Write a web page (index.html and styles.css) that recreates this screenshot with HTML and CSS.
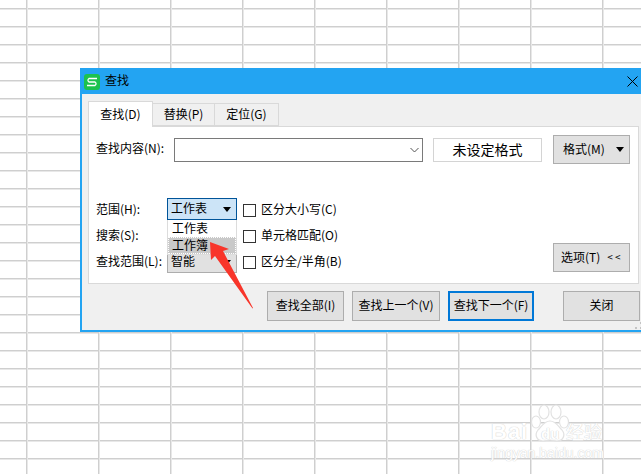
FILE: index.html
```html
<!DOCTYPE html>
<html lang="zh-CN">
<head>
<meta charset="utf-8">
<title>查找</title>
<link rel="stylesheet" href="styles.css">
</head>
<body>
<div class="watermark">
  <svg class="paw" width="44" height="40" viewBox="0 0 44 40">
    <g fill="#fff" stroke="#e2e2e2" stroke-width="1.2">
      <ellipse cx="8" cy="18" rx="4.5" ry="6"/>
      <ellipse cx="16" cy="8" rx="5" ry="7"/>
      <ellipse cx="28" cy="8" rx="5" ry="7"/>
      <ellipse cx="36" cy="18" rx="4.5" ry="6"/>
      <path d="M22 17c6 0 8 5 12 9 4 5 1 11-5 11-3 0-4-1-7-1s-4 1-7 1c-6 0-9-6-5-11 4-4 6-9 12-9z"/>
    </g>
  </svg>
  <div class="wm-brand"><span class="wm-bai">Bai</span><span class="wm-du">du</span><span class="wm-jy">经验</span></div>
  <div class="wm-url">jingyan.baidu.com</div>
</div>

<div class="dialog">
  <header class="titlebar">
    <svg class="app-icon" width="16" height="16" viewBox="0 0 16 16">
      <rect width="16" height="16" rx="3" fill="#1cc24e"/>
      <path d="M13 4.5H5a2 2 0 0 0 0 3.500h6a2 2 0 0 1 0 3.500H3" fill="none" stroke="#fff" stroke-width="1.300"/>
    </svg>
    <span class="title">查找</span>
    <svg class="close" width="11" height="11" viewBox="0 0 11 11">
      <path d="M.5.5l10 10M10.500.5l-10 10" fill="none" stroke="#000" stroke-width="1"/>
    </svg>
  </header>

  <div class="content">
    <nav class="tabs">
      <div class="tab tab-active">查找(D)</div>
      <div class="tab tab-2">替换(P)</div>
      <div class="tab tab-3">定位(G)</div>
    </nav>

    <section class="panel">
      <div class="find-row">
        <label class="find-label">查找内容(N):</label>
        <div class="find-input">
          <svg width="9" height="6" viewBox="0 0 9 6"><path d="M.5 1l4 4 4-4" fill="none" stroke="#555" stroke-width="1"/></svg>
        </div>
        <div class="format-state">未设定格式</div>
        <div class="btn btn-format">格式(M)<i class="caret caret-format"></i></div>
      </div>

      <div class="options">
        <div class="option-grid">
          <label class="opt-label">范围(H):</label>
          <div class="select select-open">
            <span>工作表</span><i class="caret"></i>
            <div class="dropdown">
              <div class="dd-item">工作表</div>
              <div class="dd-item dd-selected">工作簿</div>
            </div>
          </div>
          <span class="check"></span><span class="check-text">区分大小写(C)</span>

          <label class="opt-label">搜索(S):</label>
          <div class="select-spacer"></div>
          <span class="check"></span><span class="check-text">单元格匹配(O)</span>

          <label class="opt-label">查找范围(L):</label>
          <div class="select select-low"><span>智能</span><i class="caret"></i></div>
          <span class="check"></span><span class="check-text">区分全/半角(B)</span>
        </div>
        <div class="btn btn-options">选项(T)<span class="chev">&lt; &lt;</span></div>
      </div>
    </section>

    <footer class="actions">
      <div class="btn btn-all">查找全部(I)</div>
      <div class="btn btn-prev">查找上一个(V)</div>
      <div class="btn btn-next">查找下一个(F)</div>
      <div class="btn btn-closeit">关闭</div>
    </footer>
  </div>
  <svg class="grip" width="8" height="8" viewBox="0 0 8 8"><path d="M5 0h2v2H5zM0 5h2v2H0zM5 5h2v2H5z" fill="#c4c4c4"/></svg>

  <svg class="pointer" width="60" height="72" viewBox="0 0 60 72">
    <polygon points="1,2 20,9 14,11 44,68 43.500,68.500 6,16 2,20" fill="#f8352a"/>
  </svg>
</div>
</body>
</html>
```
FILE: styles.css
```css
* { box-sizing: border-box; }
html, body { margin: 0; height: 100%; }
body {
  position: relative;
  width: 641px;
  height: 474px;
  overflow: hidden;
  background-color: #fff;
  background-image:
    linear-gradient(to right, #cfcfcf 1px, #e8e8e8 1px, #e8e8e8 2px, transparent 2px),
    linear-gradient(to bottom, #cfcfcf 1px, #e8e8e8 1px, #e8e8e8 2px, transparent 2px);
  background-size: 72px 18px;
  background-position: 26px 8px;
  font: 12px/16px "Noto Sans CJK SC", "Liberation Sans", sans-serif;
  color: #000;
}

/* watermark */
.watermark {
  position: absolute;
  left: 491px;
  top: 403px;
  width: 118px;
  height: 56px;
}
.paw { position: absolute; left: 37px; top: 1px; }
.wm-brand {
  position: absolute;
  left: 0; top: 16px;
  display: flex;
  align-items: baseline;
  color: #fff;
  text-shadow: 0 0 1px #d2d2d2, 0 0 1px #d2d2d2;
  white-space: nowrap;
}
.wm-bai { font: bold 22px/24px "Liberation Sans", sans-serif; width: 42px; letter-spacing: 1px; }
.wm-du { font: bold 15px/24px "Liberation Sans", sans-serif; width: 33px; padding-left: 8px; }
.wm-jy { font: 18px/24px "Noto Sans CJK SC", sans-serif; letter-spacing: 0; }
.wm-url {
  position: absolute;
  left: 0; top: 42px;
  font: 14px/16px "Liberation Sans", sans-serif;
  color: #fff;
  text-shadow: 0 0 1px #d2d2d2, 0 0 1px #d2d2d2;
  white-space: nowrap;
}

/* dialog window */
.dialog {
  position: absolute;
  left: 80px;
  top: 68px;
  width: 561px;
  height: 264px;
  background: #f0f0f0;
  border-left: 2px solid #23a4f2;
  border-bottom: 2px solid #23a4f2;
  display: flex;
  flex-direction: column;
}
.titlebar {
  flex: none;
  height: 26px;
  margin-left: -2px;
  padding-left: 4px;
  background: #23a4f2;
  display: flex;
  align-items: center;
}
.app-icon { flex: none; margin-top: 1px; }
.title { margin-left: 5px; padding-bottom: 3px; }
.close { margin-left: auto; margin-right: 3px; }

.content { padding: 7px 0 0 6px; }

.tabs { display: flex; height: 25px; align-items: flex-end; position: relative; }
.tab {
  height: 23px;
  padding-bottom: 2px;
  display: flex;
  align-items: center;
  justify-content: center;
  border: 1px solid #d9d9d9;
  border-left: 0;
  background: #f0f0f0;
}
.tab-active {
  width: 65px;
  height: 26px;
  margin-bottom: -1px;
  border-left: 1px solid #d9d9d9;
  border-bottom: 0;
  background: #fff;
  position: relative;
  z-index: 1;
}
.tab-2 { width: 62px; }
.tab-3 { width: 64px; }

.panel {
  width: 551px;
  height: 158px;
  background: #fff;
  border: 1px solid #d9d9d9;
  padding: 8px 8px 0 7px;
}

.find-row { display: flex; align-items: center; height: 29px; }
.find-label { width: 78px; flex: none; padding-bottom: 3px; }
.find-input {
  width: 249px;
  height: 24px;
  flex: none;
  border: 1px solid #7a7a7a;
  background: #fff;
  display: flex;
  align-items: center;
  justify-content: flex-end;
  padding-right: 3px;
}
.format-state {
  width: 109px;
  height: 24px;
  flex: none;
  margin-left: 10px;
  padding-bottom: 2px;
  border: 1px solid #d4d4d4;
  display: flex;
  align-items: center;
  justify-content: center;
  font-size: 14px;
}

.btn {
  flex: none;
  display: flex;
  align-items: center;
  justify-content: center;
  padding-bottom: 2px;
  background: #e1e1e1;
  border: 1px solid #adadad;
}
.btn-format {
  width: 77px;
  height: 29px;
  margin-left: 11px;
  justify-content: flex-start;
  padding-left: 9px;
}
.caret {
  display: block;
  width: 0;
  height: 0;
  border-left: 4px solid transparent;
  border-right: 4px solid transparent;
  border-top: 5px solid #000;
  margin-top: 2px;
  margin-left: auto;
  margin-right: 5px;
}
.caret-format { margin-right: 5px; }

.options { display: flex; align-items: flex-end; justify-content: space-between; margin-top: 33px; }
.option-grid {
  display: grid;
  grid-template-columns: 71px 70px 13px auto;
  grid-template-rows: 26px 26px 26px;
  align-items: center;
}
.opt-label, .check-text { padding-bottom: 2px; }
.check {
  width: 13px;
  height: 13px;
  margin-left: 6px;
  border: 1px solid #333;
  background: #fff;
  grid-column: 3;
}
.check-text { padding-left: 11px; white-space: nowrap; }

.select {
  position: relative;
  height: 22px;
  width: 70px;
  align-self: start;
  margin-top: 1px;
  padding-bottom: 2px;
  display: flex;
  align-items: center;
  padding-left: 3px;
  background: #e1e1e1;
  border: 1px solid #adadad;
}
.select-open { background: #cce4f7; border-color: #005499; z-index: 2; }
.select-low { margin-top: 2px; }
.dropdown {
  position: absolute;
  left: -1px;
  top: 21px;
  width: 70px;
  height: 35px;
  background: #fff;
  border: 1px solid #dcdcdc;
  border-top: 0;
  z-index: 3;
}
.dd-item { height: 17px; padding-left: 4px; line-height: 15px; }
.dd-selected {
  padding-left: 3px;
  line-height: 13px;
  background: #c9c9c9;
  border: 1px dotted #fff;
}

.btn-options {
  width: 77px;
  height: 29px;
  margin-bottom: 3px;
  justify-content: flex-start;
  padding-left: 7px;
}
.chev { margin-left: 7px; font-size: 10px; }

.actions { display: flex; margin-top: 7px; height: 30px; padding-left: 179px; }
.actions .btn { height: 30px; }
.btn-all { width: 77px; }
.btn-prev { width: 88px; margin-left: 8px; }
.btn-next { width: 86px; margin-left: 8px; border: 2px solid #0078d7; }
.btn-closeit { width: 77px; margin-left: 29px; }

.grip { position: absolute; right: -2px; bottom: 0; }

.pointer { position: absolute; left: 127px; top: 172px; z-index: 5; }
```
